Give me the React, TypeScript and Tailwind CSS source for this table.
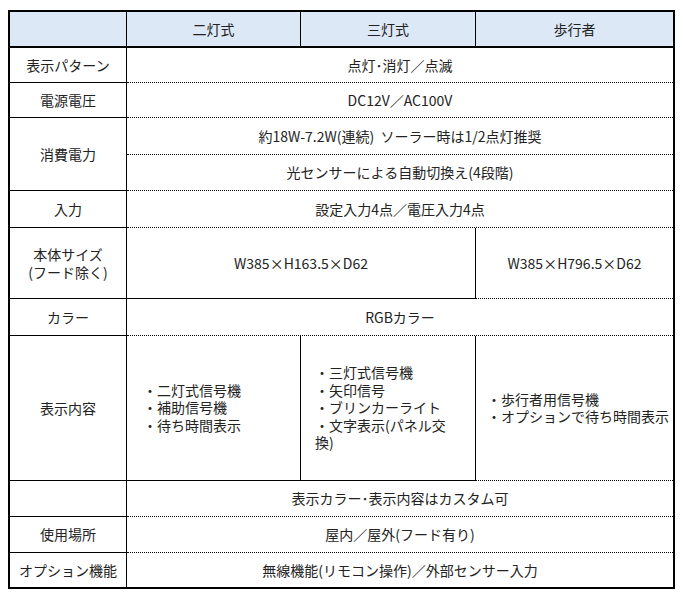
import type { ReactNode } from 'react';

const FONT = { fontFamily: '"Noto Sans CJK JP", "Noto Sans", sans-serif' };

// cell helpers: every body cell has a dotted bottom and solid right line
const base = 'flex items-center justify-center text-center border-black';
const rb = 'border-r border-r-black border-solid';
const bb = 'border-b border-b-black border-dotted';

function Cell({ className = '', children }: { className?: string; children?: ReactNode }) {
  return <div className={`${base} ${className}`}>{children}</div>;
}

function Bullets({ items }: { items: string[] }) {
  return (
    <div className="text-left leading-[17.5px]">
      {items.map((t, i) => (
        <div key={i}>{t}</div>
      ))}
    </div>
  );
}

export default function App() {
  return (
    <div className="min-h-[600px] bg-white pt-[10px] pl-[8px]" style={FONT}>
      <div
        className="w-[667px] border-2 border-solid border-black grid text-[14px] text-[#222]
          grid-cols-[117px_174px_175px_197px]
          grid-rows-[36px_35px_35px_37px_36px_37px_71px_37px_145px_36px_36px_34px]"
      >
        {/* header */}
        <div className="bg-[#dce8f5] border-r border-solid border-black border-b-2 border-b-black" />
        <Cell className="bg-[#dce8f5] border-r border-solid border-b-2">二灯式</Cell>
        <Cell className="bg-[#dce8f5] border-r border-solid border-b-2">三灯式</Cell>
        <Cell className="bg-[#dce8f5] border-solid border-b-2">歩行者</Cell>

        {/* 表示パターン */}
        <Cell className={`${rb} ${bb}`}>表示パターン</Cell>
        <Cell className={`col-span-3 ${bb}`}>点灯･消灯／点滅</Cell>

        {/* 電源電圧 */}
        <Cell className={`${rb} ${bb}`}>電源電圧</Cell>
        <Cell className={`col-span-3 ${bb}`}>DC12V／AC100V</Cell>

        {/* 消費電力 */}
        <Cell className={`row-span-2 ${rb} ${bb}`}>消費電力</Cell>
        <Cell className={`col-span-3 ${bb}`}>約18W-7.2W(連続)&nbsp;&nbsp;ソーラー時は1/2点灯推奨</Cell>
        <Cell className={`col-span-3 ${bb}`}>光センサーによる自動切換え(4段階)</Cell>

        {/* 入力 */}
        <Cell className={`${rb} ${bb}`}>入力</Cell>
        <Cell className={`col-span-3 ${bb}`}>設定入力4点／電圧入力4点</Cell>

        {/* 本体サイズ */}
        <Cell className={`${rb} ${bb} flex-col leading-[18px]`}>
          <span>本体サイズ</span>
          <span>(フード除く)</span>
        </Cell>
        <Cell className={`col-span-2 ${rb} ${bb}`}>W385×H163.5×D62</Cell>
        <Cell className={bb}>W385×H796.5×D62</Cell>

        {/* カラー */}
        <Cell className={`${rb} ${bb}`}>カラー</Cell>
        <Cell className={`col-span-3 ${bb}`}>RGBカラー</Cell>

        {/* 表示内容 */}
        <Cell className={`${rb} ${bb}`}>表示内容</Cell>
        <Cell className={`${rb} ${bb} !justify-start pl-[16px]`}>
          <Bullets items={['・二灯式信号機', '・補助信号機', '・待ち時間表示']} />
        </Cell>
        <Cell className={`${rb} ${bb} !justify-start pl-[14px]`}>
          <Bullets items={['・三灯式信号機', '・矢印信号', '・ブリンカーライト', '・文字表示(パネル交', '換)']} />
        </Cell>
        <Cell className={`${bb} !justify-start pl-[11px]`}>
          <Bullets items={['・歩行者用信号機', '・オプションで待ち時間表示']} />
        </Cell>

        {/* カスタム */}
        <Cell className={`${rb} ${bb}`} />
        <Cell className={`col-span-3 ${bb}`}>表示カラー･表示内容はカスタム可</Cell>

        {/* 使用場所 */}
        <Cell className={`${rb} ${bb}`}>使用場所</Cell>
        <Cell className={`col-span-3 ${bb}`}>屋内／屋外(フード有り)</Cell>

        {/* オプション機能 */}
        <Cell className={rb}>オプション機能</Cell>
        <Cell className="col-span-3">無線機能(リモコン操作)／外部センサー入力</Cell>
      </div>
    </div>
  );
}
